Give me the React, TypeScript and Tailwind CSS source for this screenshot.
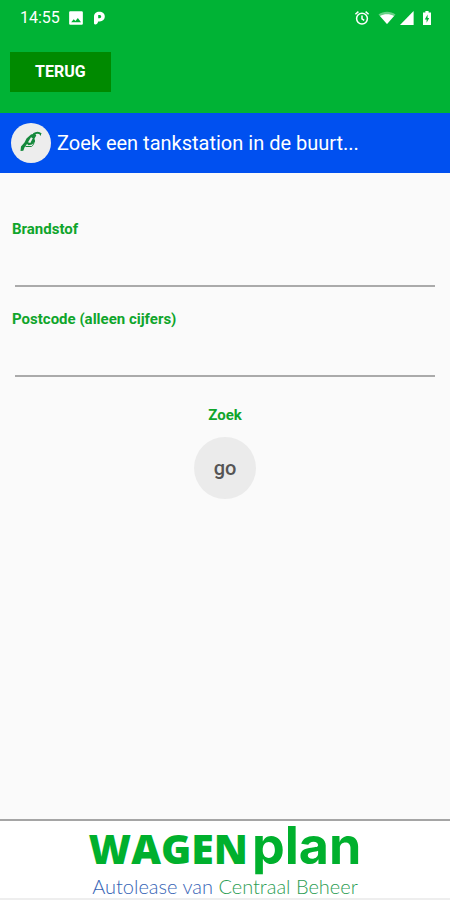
import { useState } from "react";
import type { FormEvent } from "react";

interface FieldProps {
  id: string;
  label: string;
  value: string;
  onChange: (value: string) => void;
  numeric?: boolean;
}

function StatusBar() {
  return (
    <div className="flex h-9 items-center justify-between pr-4.5 pl-5 text-white">
      <div className="flex items-center gap-2">
        <span className="text-base">14:55</span>
        <svg viewBox="0 0 14 14" className="h-4 w-4" aria-hidden="true">
          <path
            fill="currentColor"
            fillRule="evenodd"
            d="M2 1h10a1 1 0 0 1 1 1v10a1 1 0 0 1-1 1H2a1 1 0 0 1-1-1V2a1 1 0 0 1 1-1Zm0.8 9.8h8.6L8.6 7 6.5 9.6 5 8Z"
          />
        </svg>
        <svg viewBox="0 0 14 16" className="h-4 w-3.5" aria-hidden="true">
          <path
            fill="currentColor"
            fillRule="evenodd"
            d="M2 6.5C2 3.5 4.2 1.7 7.2 1.7c3.3 0 5.600 1.900 5.600 4.800s-2.200 4.900-5 4.900H6.200c-.5 2-1.400 3-3 3C2.300 14.400 2 13.800 2 13ZM6.200 5v3.200h1.300c1 0 1.700-.6 1.700-1.600S8.500 5 7.500 5Z"
          />
        </svg>
      </div>
      <div className="flex items-center gap-2">
        <svg viewBox="0 0 16 16" className="h-4 w-4" aria-hidden="true">
          <g fill="none" stroke="currentColor" strokeWidth="1.5">
            <circle cx="8" cy="8.6" r="5.4" />
            <path d="M8 5.4v3.4l2.2 1.6M1.4 4.2l3-2.6M14.6 4.2l-3-2.6" />
          </g>
        </svg>
        <svg viewBox="0 0 18 14" className="h-3.5 w-4.5" aria-hidden="true">
          <path fill="currentColor" fillOpacity="0.4" d="M9 13 0.5 3.6C5.5-0.2 12.5-0.2 17.5 3.6Z" />
          <path fill="currentColor" d="M9 13 2 5C6 2.6 12 2.6 16 5Z" />
        </svg>
        <svg viewBox="0 0 14 14" className="-ml-1 h-3.5 w-3.5" aria-hidden="true">
          <path fill="currentColor" d="M13.6 0v14H0Z" />
        </svg>
        <svg viewBox="0 0 10 14" className="h-3.5 w-2.5" aria-hidden="true">
          <path
            fill="currentColor"
            fillRule="evenodd"
            d="M3.4 0h3.2v1.4H9V14H1V1.4h2.4ZM5.6 3.6 2.8 8.4h1.8v3.4L7.2 7H5.6Z"
          />
        </svg>
      </div>
    </div>
  );
}

function NozzleIcon() {
  return (
    <svg viewBox="0 0 40 40" className="h-10 w-10" aria-hidden="true">
      <path
        fill="#16893c"
        fillRule="evenodd"
        d="M9.5 28 10 23.5 13.5 19.5 15.5 15.5 20 11.5 24 10.5 25.3 12.5 23.5 15.5 24 18.5 21 21.5 17.5 22.2 16 21 13.5 24.5 12.3 27.8ZM17 19.3 19.3 20 21.8 15.2 20 14.3Z"
      />
      <g fill="none" stroke="#16893c" strokeLinejoin="round">
        <path strokeWidth="2" d="M22.5 11.2C25 9.5 28 9.3 30 11.3" />
        <path strokeWidth="1" d="M14.5 23.5H20.5C22 22.5 23 21 23.5 17" />
      </g>
      <path stroke="#16893c" strokeWidth="1" d="M29.5 10.5v2" />
    </svg>
  );
}

function Field({ id, label, value, onChange, numeric = false }: FieldProps) {
  return (
    <div className="flex flex-col">
      <label htmlFor={id} className="text-[15px] leading-5 font-bold text-[#0fa52b]">
        {label}
      </label>
      <input
        id={id}
        type="text"
        inputMode={numeric ? "numeric" : "text"}
        value={value}
        onChange={(e) => onChange(e.target.value)}
        className="mx-[3px] mt-3 h-9 border-b-2 border-[#aaaaaa] bg-transparent text-base text-gray-800 outline-none focus:border-[#00b335]"
      />
    </div>
  );
}

export default function App() {
  const [fuel, setFuel] = useState("");
  const [postcode, setPostcode] = useState("");

  const handleSubmit = (e: FormEvent) => {
    e.preventDefault();
  };

  return (
    <div className="flex min-h-screen flex-col bg-[#fafafa] font-[Roboto,sans-serif]">
      <header className="bg-[#00b335] pb-[21px]">
        <StatusBar />
        <button
          type="button"
          className="mt-4 ml-2.5 h-10 bg-[#008a00] px-[25px] text-base font-bold text-white"
        >
          TERUG
        </button>
      </header>

      <div className="flex items-center gap-1.5 bg-[#0050f0] px-[11px] py-2.5">
        <div className="rounded-full bg-[#ededed]">
          <NozzleIcon />
        </div>
        <h1 className="text-xl text-white">Zoek een tankstation in de buurt...</h1>
      </div>

      <main className="flex-1 pt-[46px]">
        <form onSubmit={handleSubmit} className="flex flex-col gap-5.5 px-3">
          <Field id="brandstof" label="Brandstof" value={fuel} onChange={setFuel} />
          <Field
            id="postcode"
            label="Postcode (alleen cijfers)"
            value={postcode}
            onChange={setPostcode}
            numeric
          />
          <div className="mt-1.5 flex flex-col items-center gap-3">
            <span id="zoek" className="text-[15px] leading-5 font-bold text-[#0fa52b]">
              Zoek
            </span>
            <button
              type="submit"
              aria-describedby="zoek"
              className="h-[62px] w-[62px] rounded-full bg-[#ebebeb] text-xl font-medium text-[#555555]"
            >
              go
            </button>
          </div>
        </form>
      </main>

      <footer className="flex flex-col items-center border-t-2 border-b-2 border-t-[#a5a5a5] border-b-[#eeeeee] bg-white">
        <div className="flex h-[53px] items-baseline gap-1 leading-[50px] text-[#00b02d]">
          <span className="font-['Open_Sans',sans-serif] text-[41px] font-extrabold">WAGEN</span>
          <span className="font-[Inter,sans-serif] text-[52px] leading-[50px] font-bold">plan</span>
        </div>
        <p className="font-[Lato,sans-serif] text-xl leading-6 font-light text-[#2c9d53]">
          <span className="text-[#3563b5]">Autolease van</span> Centraal Beheer
        </p>
      </footer>
    </div>
  );
}
